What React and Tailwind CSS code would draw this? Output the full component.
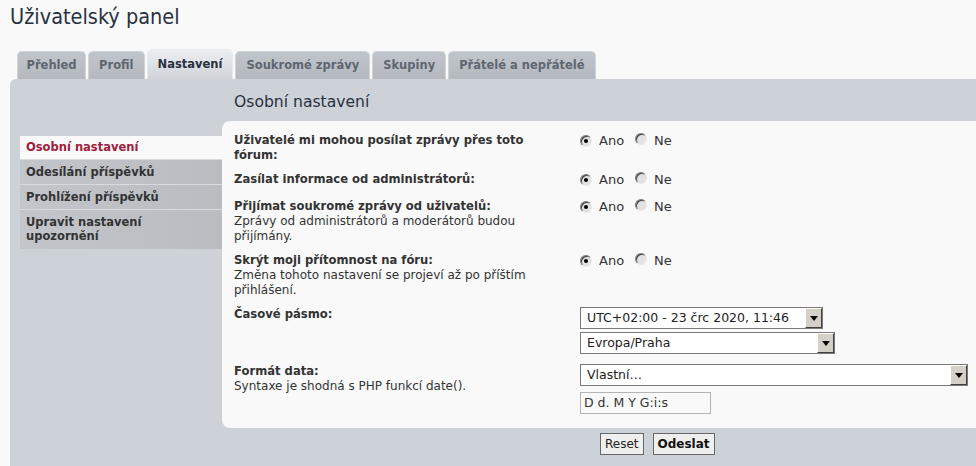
import React from "react";

const tabs = ["Přehled", "Profil", "Nastavení", "Soukromé zprávy", "Skupiny", "Přátelé a nepřátelé"];
const menu = ["Osobní nastavení", "Odesílání příspěvků", "Prohlížení příspěvků", "Upravit nastavení"];

const Radio = ({ checked }) => (
    <span className="relative inline-block w-[12px] h-[12px] rounded-full border border-t-[#7a7a7a] border-l-[#7a7a7a] border-b-[#e8e8e8] border-r-[#e8e8e8] bg-[#e2e2e2] shadow-[inset_1px_1px_0_#404040]">
        {checked && <span className="absolute left-[3px] top-[3px] w-[4px] h-[4px] rounded-full bg-black" />}
    </span>
);

const YesNo = () => (
    <div className="flex items-center text-[13px] text-[#333] h-[15px]">
        <Radio checked />
        <span className="ml-[7px]">Ano</span>
        <span className="ml-[11px]"><Radio /></span>
        <span className="ml-[7px]">Ne</span>
    </div>
);

const Select = ({ width, height = "h-[22px]", children }) => (
    <div className={`flex items-center border border-[#7a7a7a] bg-white ${width} ${height}`}>
        <span className="flex-1 pl-[6px] text-[12.5px] text-[#222] whitespace-nowrap overflow-hidden">{children}</span>
        <span className="flex items-center justify-center w-[17px] h-full bg-[#d4d0c8] border border-t-white border-l-white border-b-[#404040] border-r-[#404040]">
            <svg width="8" height="5" viewBox="0 0 8 5"><path d="M0 0h8L4 5z" fill="#000" /></svg>
        </span>
    </div>
);

const Row = ({ label, desc, className = "", children }) => (
    <div className={`flex ${className}`}>
        <div className="w-[346px] pr-[20px] leading-[15px]">
            <div className="font-bold text-[11.6px] text-[#333]">{label}</div>
            {desc && <div className="text-[12px] text-[#333]">{desc}</div>}
        </div>
        <div className="flex flex-col">{children}</div>
    </div>
);

export default function App() {
    return (
        <div className="h-[466px] overflow-hidden bg-[#f9f9f9] text-[#333]" style={{ fontFamily: '"DejaVu Sans", Verdana, sans-serif' }}>
            <h2 className="pl-[10px] pt-[2px] text-[21.5px] leading-[29px] text-[#28313f]" style={{ fontFamily: '"DejaVu Sans Condensed", "DejaVu Sans", sans-serif' }}>
                Uživatelský panel
            </h2>

            <div className="flex items-end gap-[2px] pl-[17px] mt-[19px] h-[29px]">
                {tabs.map((t) =>
                    t === "Nastavení" ? (
                        <div key={t} className="h-[30px] px-[10px] flex items-center rounded-t-[5px] bg-gradient-to-b from-[#eceef1] to-[#cfd4d9] border border-b-0 border-[#e8eaed] text-[11.5px] font-bold text-[#28313f]">
                            {t}
                        </div>
                    ) : (
                        <div key={t} className={`h-[28px] flex items-center rounded-t-[5px] bg-gradient-to-b from-[#c0c5cb] to-[#b3b9bf] border border-b-0 border-[#d0d4d8] text-[11.5px] font-bold text-[#5e6670] ${t === "Přehled" ? "px-[8.5px]" : "px-[10px]"}`}>
                            {t}
                        </div>
                    )
                )}
            </div>

            <div className="ml-[10px] rounded-tl-[6px] bg-[#cdd2d8] h-[400px] flex">
                <div className="w-[212px] pl-[10px] pt-[57px]">
                    {menu.map((m, i) =>
                        i === 0 ? (
                            <div key={m} className="h-[23px] flex items-center px-[6px] bg-[#f9f9f9] text-[11.5px] font-bold text-[#a0203c]">{m}</div>
                        ) : (
                            <div key={m} className={`px-[6px] border-t border-[#d8dbde] bg-gradient-to-r from-[#c2c6cb] to-[#b9bdc2] text-[11.5px] font-bold text-[#333] leading-[14px] ${i === 3 ? "h-[40px] pt-[5px]" : "h-[25px] flex items-center"}`}>
                                {m}
                                {i === 3 && (<><br />upozornění</>)}
                            </div>
                        )
                    )}
                </div>

                <div className="flex-1">
                    <h3 className="h-[42px] pl-[12px] pt-[14px] leading-[18px] text-[15.6px] text-[#28313f]">Osobní nastavení</h3>
                    <div className="bg-[#f9f9f9] rounded-l-[8px] pl-[12px] pt-[12px] pb-[14px]">
                        <Row label="Uživatelé mi mohou posílat zprávy přes toto fórum:">
                            <YesNo />
                        </Row>
                        <Row className="mt-[9px]" label="Zasílat informace od administrátorů:">
                            <YesNo />
                        </Row>
                        <Row className="mt-[12px]" label="Přijímat soukromé zprávy od uživatelů:" desc="Zprávy od administrátorů a moderátorů budou přijímány.">
                            <YesNo />
                        </Row>
                        <Row className="mt-[9px]" label="Skrýt moji přítomnost na fóru:" desc="Změna tohoto nastavení se projeví až po příštím přihlášení.">
                            <YesNo />
                        </Row>
                        <Row className="mt-[9px]" label="Časové pásmo:">
                            <Select width="w-[243px]">UTC+02:00 - 23 črc 2020, 11:46</Select>
                            <div className="mt-[3px]">
                                <Select width="w-[255px]" height="h-[22px]">Evropa/Praha</Select>
                            </div>
                        </Row>
                        <Row className="mt-[10px]" label="Formát data:" desc="Syntaxe je shodná s PHP funkcí date().">
                            <Select width="w-[388px]">Vlastní…</Select>
                            <div className="mt-[6px] w-[131px] h-[22px] border border-[#b4b4b4] bg-[#f9f9f9] flex items-center pl-[3px] text-[12.5px] text-[#333]">
                                D d. M Y G:i:s
                            </div>
                        </Row>
                    </div>
                    <div className="flex gap-[9px] pl-[378px] pt-[5px]">
                        <button className="h-[22px] px-[4px] border border-[#666] bg-[#efefef] text-[12px] text-[#222]">Reset</button>
                        <button className="h-[22px] px-[4px] border border-[#666] bg-[#efefef] text-[12px] font-bold text-[#111]">Odeslat</button>
                    </div>
                </div>
            </div>
        </div>
    );
}
